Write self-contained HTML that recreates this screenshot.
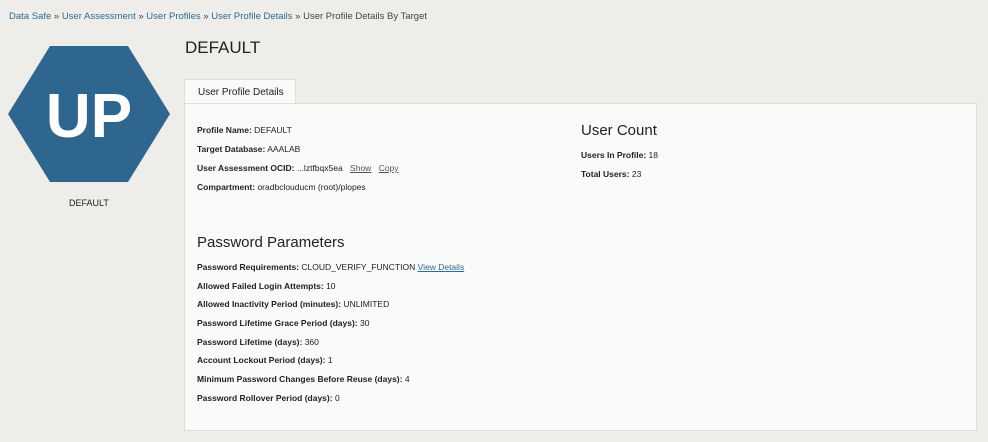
<!DOCTYPE html>
<html><head><style>
body{margin:0;width:988px;height:442px;background:#efedea;font-family:"Liberation Sans",sans-serif;position:relative;overflow:hidden;color:#222}
.a{position:absolute;white-space:nowrap}
.bc{font-size:9.5px;color:#444;top:11px;left:9px}
.bc a{color:#2f6a98;text-decoration:none}
.r{font-size:8.5px;position:absolute;white-space:nowrap;color:#222}
.r b{font-weight:bold}
.lk{color:#555;text-decoration:underline;margin-left:5px}
h2{position:absolute;margin:0;font-weight:normal;font-size:15px;color:#222}
</style></head><body>
<div class="a bc"><a>Data Safe</a> » <a>User Assessment</a> » <a>User Profiles</a> » <a>User Profile Details</a> » User Profile Details By Target</div>
<svg class="a" style="left:0;top:0" width="180" height="190"><polygon points="50,46 128,46 170,114 128,182 50,182 8,114" fill="#2f668f"/><text x="89" y="137" text-anchor="middle" font-family="Liberation Sans" font-weight="bold" font-size="62" fill="#fff">UP</text></svg>
<div class="a" style="left:69px;top:198px;font-size:9px">DEFAULT</div>
<div class="a" style="left:185px;top:38px;font-size:17px">DEFAULT</div>
<div class="a" style="left:184px;top:79px;width:112px;height:25px;background:#fafaf9;border:1px solid #ddd;border-bottom:none;box-sizing:border-box;font-size:10px;padding:7px 0 0 13px">User Profile Details</div>
<div class="a" style="left:184px;top:103px;width:793px;height:328px;background:#fafaf9;border:1px solid #ddd;box-sizing:border-box"></div>
<div class="r" style="left:197px;top:125px"><b>Profile Name:</b> DEFAULT</div>
<div class="r" style="left:197px;top:144px"><b>Target Database:</b> AAALAB</div>
<div class="r" style="left:197px;top:163px"><b>User Assessment OCID:</b> ...lztfbqx5ea <span class="lk">Show</span> <span class="lk">Copy</span></div>
<div class="r" style="left:197px;top:182px"><b>Compartment:</b> oradbclouducm (root)/plopes</div>
<h2 style="left:581px;top:122px">User Count</h2>
<div class="r" style="left:581px;top:150px"><b>Users In Profile:</b> 18</div>
<div class="r" style="left:581px;top:169px"><b>Total Users:</b> 23</div>
<h2 style="left:197px;top:234px">Password Parameters</h2>
<div class="r" style="left:197px;top:262px"><b>Password Requirements:</b> CLOUD_VERIFY_FUNCTION <span style="color:#2f6a98;text-decoration:underline">View Details</span></div>
<div class="r" style="left:197px;top:281px"><b>Allowed Failed Login Attempts:</b> 10</div>
<div class="r" style="left:197px;top:299px"><b>Allowed Inactivity Period (minutes):</b> UNLIMITED</div>
<div class="r" style="left:197px;top:318px"><b>Password Lifetime Grace Period (days):</b> 30</div>
<div class="r" style="left:197px;top:337px"><b>Password Lifetime (days):</b> 360</div>
<div class="r" style="left:197px;top:355px"><b>Account Lockout Period (days):</b> 1</div>
<div class="r" style="left:197px;top:374px"><b>Minimum Password Changes Before Reuse (days):</b> 4</div>
<div class="r" style="left:197px;top:393px"><b>Password Rollover Period (days):</b> 0</div>
</body></html>
